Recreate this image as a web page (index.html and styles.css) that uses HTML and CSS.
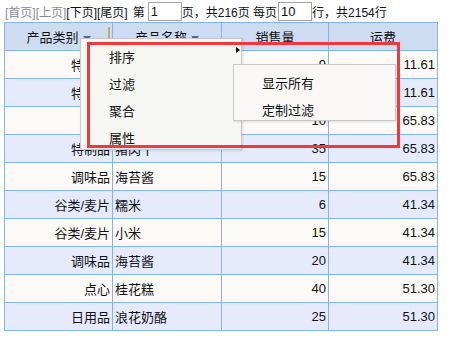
FILE: index.html
```html
<!doctype html>
<html lang="zh-CN">
  <head>
    <meta charset="UTF-8" />
    <meta name="viewport" content="width=device-width, initial-scale=1.0" />
    <title>报表分页</title>
    <link rel="stylesheet" href="styles.css">
  </head>
  <body>
    <div class="page">
      <div class="pager">
        <a href="#" class="pager-link disabled">[首页]</a><a href="#" class="pager-link disabled">[上页]</a><a href="#" class="pager-link">[下页]</a><a href="#" class="pager-link">[尾页]</a>
        <span class="pager-label">第</span><input class="pager-input" type="text" value="1"><span>页，共216页 每页</span><input class="pager-input rows" type="text" value="10"><span>行，共2154行</span>
      </div>

      <table class="report">
        <colgroup>
          <col class="col-a">
          <col class="col-b">
          <col class="col-c">
          <col class="col-d">
        </colgroup>
        <thead>
          <tr>
            <th>产品类别<span class="drop-arrow"></span><span class="resize-bar"></span></th>
            <th>产品名称<span class="drop-arrow"></span></th>
            <th>销售量</th>
            <th>运费</th>
          </tr>
        </thead>
        <tbody>
          <tr><td class="num">特制品</td><td>猪肉干</td><td class="num">9</td><td class="num">11.61</td></tr>
          <tr><td class="num">特制品</td><td>猪肉干</td><td class="num">12</td><td class="num">11.61</td></tr>
          <tr><td class="num">饮料</td><td>苹果汁</td><td class="num">10</td><td class="num">65.83</td></tr>
          <tr><td class="num">特制品</td><td>猪肉干</td><td class="num">35</td><td class="num">65.83</td></tr>
          <tr><td class="num">调味品</td><td>海苔酱</td><td class="num">15</td><td class="num">65.83</td></tr>
          <tr><td class="num">谷类/麦片</td><td>糯米</td><td class="num">6</td><td class="num">41.34</td></tr>
          <tr><td class="num">谷类/麦片</td><td>小米</td><td class="num">15</td><td class="num">41.34</td></tr>
          <tr><td class="num">调味品</td><td>海苔酱</td><td class="num">20</td><td class="num">41.34</td></tr>
          <tr><td class="num">点心</td><td>桂花糕</td><td class="num">40</td><td class="num">51.30</td></tr>
          <tr><td class="num">日用品</td><td>浪花奶酪</td><td class="num">25</td><td class="num">51.30</td></tr>
        </tbody>
      </table>

      <!-- column header context menu -->
      <ul class="ctx-menu">
        <li class="ctx-item">排序<span class="sub-arrow"></span></li>
        <li class="ctx-item">过滤</li>
        <li class="ctx-item">聚合</li>
        <li class="ctx-item">属性</li>
      </ul>

      <ul class="ctx-menu sub-menu">
        <li class="ctx-item">显示所有</li>
        <li class="ctx-item">定制过滤</li>
      </ul>

      <div class="highlight-box"></div>
    </div>
  </body>
</html>
```

FILE: styles.css
```css
* {
  margin: 0;
  padding: 0;
  box-sizing: border-box;
}

body {
  font-family: 'Liberation Sans', 'Noto Sans CJK SC', sans-serif;
  font-size: 13px;
  color: #111;
  background: #ffffff;
}

.page {
  position: relative;
  width: 473px;
  height: 344px;
}

/* Pager */
.pager {
  display: flex;
  align-items: center;
  height: 22px;
  padding: 0 0 0 5px;
  font-size: 12px;
  white-space: nowrap;
}

.pager-link {
  color: #111;
  text-decoration: none;
}

.pager-link.disabled {
  color: #8a8a9c;
}

.pager-label {
  margin-left: 5px;
}

.pager-input {
  width: 34px;
  height: 19px;
  margin: 0 0 0 3px;
  padding: 0 2px;
  border: 1px solid #a4a4a4;
  font-family: inherit;
  font-size: 13px;
  color: #111;
  outline: none;
}

.pager-input.rows {
  margin-left: 1px;
}

/* Report table */
.report {
  margin-left: 4px;
  border-collapse: collapse;
  table-layout: fixed;
  width: 433px;
}

.col-a { width: 108px; }
.col-b { width: 109px; }
.col-c { width: 107px; }
.col-d { width: 109px; }

.report th,
.report td {
  height: 28px;
  border: 1px solid #86b4e6;
  white-space: nowrap;
  overflow: hidden;
  font-weight: normal;
}

.report th {
  position: relative;
  background: #cddcf1;
  text-align: center;
}

.report td {
  padding: 0 2px;
}

.report td.num {
  text-align: right;
}

.report tbody tr:nth-child(odd) td {
  background: #fbfaf6;
}

.report tbody tr:nth-child(even) td {
  background: #e5ebfd;
}

.drop-arrow {
  display: inline-block;
  margin-left: 4px;
  vertical-align: middle;
  border-left: 4px solid transparent;
  border-right: 4px solid transparent;
  border-top: 5px solid #56668c;
}

.resize-bar {
  position: absolute;
  top: 4px;
  right: 2px;
  width: 2px;
  height: 17px;
  background: #c6ad6a;
}

/* Context menus */
.ctx-menu {
  position: absolute;
  left: 80px;
  top: 38px;
  width: 162px;
  height: 112px;
  padding-top: 5px;
  list-style: none;
  background: #f6f6f3;
  border: 1px solid #c9c9c9;
  box-shadow: 1px 1px 2px rgba(0, 0, 0, 0.12);
}

.ctx-item {
  position: relative;
  height: 27px;
  line-height: 27px;
  padding-left: 28px;
  cursor: default;
}

.sub-arrow {
  position: absolute;
  top: 3px;
  right: 1px;
  border-top: 3px solid transparent;
  border-bottom: 3px solid transparent;
  border-left: 4px solid #000;
}

.sub-menu {
  left: 233px;
  top: 64px;
  width: 163px;
  height: 57px;
  padding-top: 5px;
  background: #f9f8f6;
}

.sub-menu .ctx-item {
  padding-left: 28px;
}

/* Annotation frame */
.highlight-box {
  position: absolute;
  left: 87px;
  top: 42px;
  width: 313px;
  height: 106px;
  border: 3px solid #f0393c;
  pointer-events: none;
}
```
